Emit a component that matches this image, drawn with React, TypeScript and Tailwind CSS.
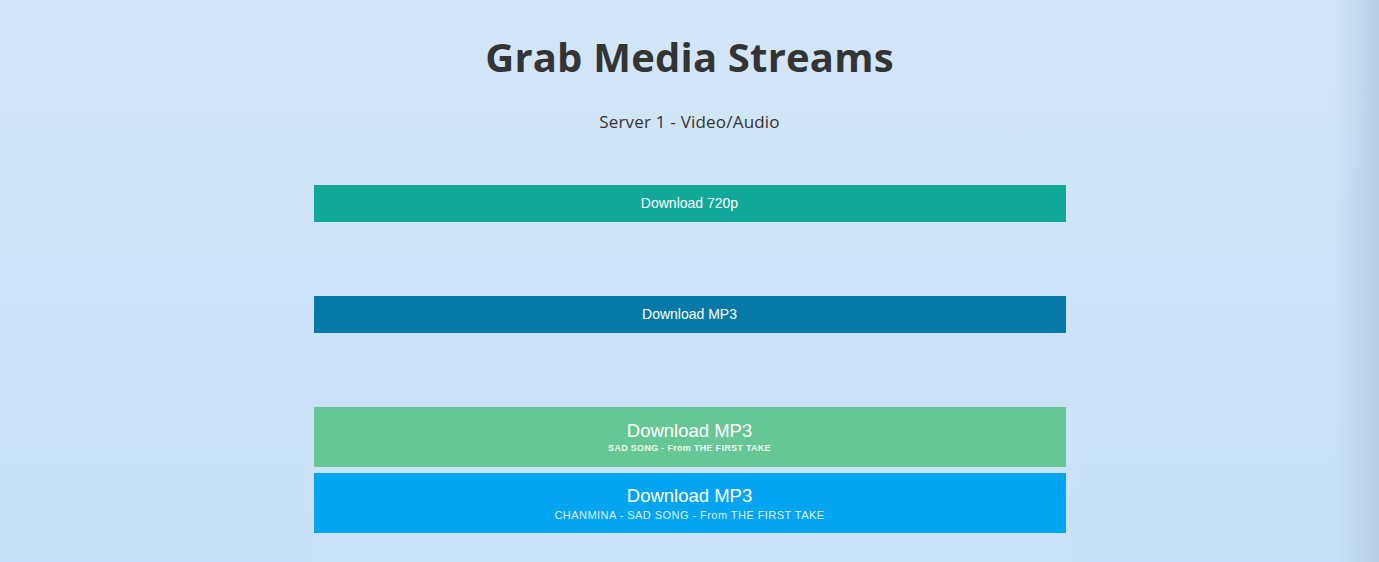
export default function App() {
  return (
    <div className="relative min-h-[562px] w-full overflow-hidden bg-gradient-to-b from-[#d3e6f7] to-[#c8e1f8] font-['Open_Sans',sans-serif]">
      <div className="flex flex-col items-center pt-[33px]">
        <h1 className="text-[40px] font-bold leading-[48px] text-[#343434] tracking-[0.2px]">Grab Media Streams</h1>
        <p className="mt-[29px] text-[17px] font-medium leading-6 tracking-[0.2px] text-[#333]">Server 1 - Video/Audio</p>
      </div>

      <div className="mx-auto mt-[51px] w-[752px] font-['Liberation_Sans',Arial,sans-serif]">
        <button className="flex h-[37px] w-full items-center justify-center bg-[#11a899] text-[14px] text-white">
          Download 720p
        </button>
        <button className="mt-[74px] flex h-[37px] w-full items-center justify-center bg-[#0779a8] text-[14px] text-white">
          Download MP3
        </button>
      </div>

      <div className="mx-auto mt-[62px] w-[770px] bg-[#cce3f8]/60 px-[9px] pb-[30px] pt-[12px] font-['Liberation_Sans',Arial,sans-serif]">
        <button className="flex h-[60px] w-full flex-col items-center justify-center bg-[#66c795] text-white">
          <span className="text-[18.5px] leading-[22px]">Download MP3</span>
          <span className="mt-[1px] text-[9px] font-bold leading-[11px] tracking-[0.3px] text-[#eef8f2]">SAD SONG - From THE FIRST TAKE</span>
        </button>
        <button className="mt-[6px] flex h-[60px] w-full flex-col items-center justify-center bg-[#03a5f1] text-white">
          <span className="text-[18.5px] leading-[22px]">Download MP3</span>
          <span className="mt-[2px] text-[11px] leading-[13px] tracking-[0.45px] text-[#dff1fd]">CHANMINA - SAD SONG - From THE FIRST TAKE</span>
        </button>
      </div>

      <div className="pointer-events-none absolute right-0 top-0 h-full w-[45px] bg-gradient-to-r from-transparent to-[#b6cde3]" />
    </div>
  );
}
